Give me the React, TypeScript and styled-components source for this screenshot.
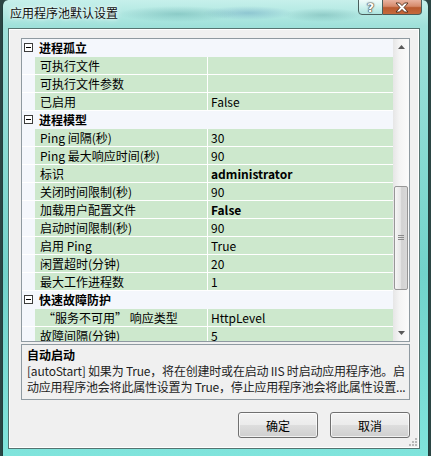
import styled, { createGlobalStyle } from "styled-components";

const GlobalStyle = createGlobalStyle`
  html, body {
    margin: 0;
    padding: 0;
    background: #2b4544;
  }
  body {
    font-family: "Noto Sans CJK SC", sans-serif;
    font-size: 12px;
    color: #000;
  }
`;

const Window = styled.div`
  width: 427px;
  height: 456px;
  margin-left: 2px;
  box-sizing: border-box;
  border-left: 1px solid #21403e;
  border-right: 1px solid #21403e;
  border-radius: 6px 6px 0 0;
  overflow: hidden;
  background:
    radial-gradient(ellipse 60px 8px at 175px 14px, rgba(70, 150, 150, 0.35), transparent),
    radial-gradient(ellipse 45px 7px at 245px 13px, rgba(60, 120, 170, 0.3), transparent),
    radial-gradient(ellipse 40px 7px at 320px 15px, rgba(70, 140, 140, 0.3), transparent),
    linear-gradient(180deg, #c6f0eb 0px, #9fe1da 26px, #72d3cb 60%, #80e4dc 100%);
  display: flex;
  flex-direction: column;
`;

const TitleBar = styled.div`
  height: 28px;
  flex: none;
  display: flex;
  justify-content: space-between;
  align-items: flex-start;
  padding: 0 6px 0 7px;
`;

const Title = styled.div`
  margin-top: 4px;
  font-size: 12px;
  line-height: 17px;
  color: #101010;
  text-shadow: 0 0 6px rgba(255, 255, 255, 0.9), 0 0 3px rgba(255, 255, 255, 0.9);
`;

const CaptionButtons = styled.div`
  display: flex;
  margin-top: -1px;
`;

const CaptionButton = styled.div<{ $close?: boolean }>`
  width: ${(p) => (p.$close ? "39px" : "25px")};
  height: 16px;
  box-sizing: border-box;
  border: 1px solid #4a5e5c;
  border-left-width: ${(p) => (p.$close ? "0" : "1px")};
  border-radius: ${(p) => (p.$close ? "0 0 4px 0" : "0 0 0 4px")};
  background: ${(p) =>
    p.$close
      ? "linear-gradient(180deg, #e9b3a0 0%, #d68a6b 45%, #b9592f 55%, #c66a3c 100%)"
      : "linear-gradient(180deg, rgba(255,255,255,0.75) 0%, rgba(220,245,242,0.6) 50%, rgba(170,225,220,0.5) 100%)"};
  display: flex;
  align-items: center;
  justify-content: center;
  font: bold 13px "DejaVu Sans", sans-serif;
  color: #fff;
  text-shadow: 0 0 1px #333, 0 0 1px #333, 0 0 2px #333;
`;

const Client = styled.div`
  margin: 0 8px 0 5px;
  width: 412px;
  height: 421px;
  box-sizing: border-box;
  border: 1px solid #557370;
  box-shadow: inset 0 0 0 1px #ffffff;
  background: #f0f0f0;
  padding: 9px 9px 0 12px;
  position: relative;
  display: flex;
  flex-direction: column;
`;

const Grid = styled.div`
  height: 304px;
  box-sizing: border-box;
  border: 1px solid #8f9aa1;
  display: flex;
  background: #f4f7fc;
`;

const Rows = styled.div`
  width: 371px;
  overflow: hidden;
  display: flex;
  flex-direction: column;
`;

const Row = styled.div`
  height: 17px;
  flex: none;
  display: flex;
  border-bottom: 1px solid #ffffff;
  line-height: 17px;
  white-space: nowrap;
`;

const CategoryRow = styled(Row)`
  border-bottom-color: #f4f7fc;
  font-weight: bold;
`;

const Gutter = styled.div`
  width: 13px;
  flex: none;
  background: #f4f7fc;
  display: flex;
  align-items: center;
`;

const Toggle = styled.div`
  width: 9px;
  height: 9px;
  margin-left: 2px;
  box-sizing: border-box;
  border: 1px solid #3c3c3c;
  background: #fff;
  position: relative;
  &::after {
    content: "";
    position: absolute;
    left: 1px;
    right: 1px;
    top: 3px;
    height: 1px;
    background: #000;
  }
`;

const CategoryLabel = styled.div`
  padding-left: 4px;
`;

const LabelCell = styled.div<{ $indent?: boolean }>`
  width: 173px;
  flex: none;
  box-sizing: border-box;
  background: #cde8cd;
  border-right: 1px solid #ffffff;
  padding-left: ${(p) => (p.$indent ? "8px" : "5px")};
  overflow: hidden;
`;

const ValueCell = styled.div<{ $bold?: boolean }>`
  flex: 1;
  background: #cde8cd;
  padding-left: 3px;
  font-weight: ${(p) => (p.$bold ? "bold" : "normal")};
`;

const ScrollBar = styled.div`
  width: 16px;
  display: flex;
  flex-direction: column;
  background: linear-gradient(90deg, #e6e6e6, #f4f4f4 40%, #fbfbfb);
`;

const ArrowBox = styled.div`
  height: 16px;
  flex: none;
  display: flex;
  align-items: center;
  justify-content: center;
`;

const Track = styled.div`
  flex: 1;
`;

const Thumb = styled.div<{ $top: number; $size: number }>`
  margin: ${(p) => p.$top}px auto 0;
  width: 14px;
  height: ${(p) => p.$size}px;
  box-sizing: border-box;
  border: 1px solid #979797;
  border-radius: 2px;
  background: linear-gradient(90deg, #f6f6f6 0%, #e6e6e6 45%, #d2d2d2 55%, #d9d9d9 100%);
  display: flex;
  align-items: center;
  justify-content: center;
`;

const Description = styled.div`
  margin-top: 2px;
  height: 56px;
  box-sizing: border-box;
  border: 1px solid #8f9aa1;
  padding: 0 5px;
  white-space: nowrap;
  overflow: hidden;
  color: #1e1e1e;
`;

const DescTitle = styled.div`
  font-weight: bold;
  line-height: 17px;
  margin-top: 1px;
  color: #000;
`;

const DescText = styled.div`
  line-height: 16px;
  letter-spacing: -0.2px;
`;

const ButtonRow = styled.div`
  margin-top: 12px;
  display: flex;
  justify-content: flex-end;
  gap: 12px;
`;

const Button = styled.button`
  width: 80px;
  height: 26px;
  box-sizing: border-box;
  border: 1px solid #707070;
  border-radius: 3px;
  background: linear-gradient(180deg, #f3f3f3 0%, #ebebeb 48%, #dddddd 52%, #cfcfcf 100%);
  box-shadow: inset 0 0 0 1px rgba(255, 255, 255, 0.7);
  font-family: "Noto Sans CJK SC", sans-serif;
  font-size: 12px;
  color: #000;
  padding: 0;
`;

const Grip = styled.svg`
  position: absolute;
  right: 2px;
  bottom: 2px;
`;

type Item = {
  kind: "cat" | "item";
  label: string;
  value?: string;
  bold?: boolean;
  indent?: boolean;
};

const items: Item[] = [
  { kind: "cat", label: "进程孤立" },
  { kind: "item", label: "可执行文件", value: "" },
  { kind: "item", label: "可执行文件参数", value: "" },
  { kind: "item", label: "已启用", value: "False" },
  { kind: "cat", label: "进程模型" },
  { kind: "item", label: "Ping 间隔(秒)", value: "30" },
  { kind: "item", label: "Ping 最大响应时间(秒)", value: "90" },
  { kind: "item", label: "标识", value: "administrator", bold: true },
  { kind: "item", label: "关闭时间限制(秒)", value: "90" },
  { kind: "item", label: "加载用户配置文件", value: "False", bold: true },
  { kind: "item", label: "启动时间限制(秒)", value: "90" },
  { kind: "item", label: "启用 Ping", value: "True" },
  { kind: "item", label: "闲置超时(分钟)", value: "20" },
  { kind: "item", label: "最大工作进程数", value: "1" },
  { kind: "cat", label: "快速故障防护" },
  { kind: "item", label: "“服务不可用” 响应类型", value: "HttpLevel", indent: true },
  { kind: "item", label: "故障间隔(分钟)", value: "5" },
];

const App = () => {
  return (
    <>
      <GlobalStyle />
      <Window>
        <TitleBar>
          <Title>应用程序池默认设置</Title>
          <CaptionButtons>
            <CaptionButton>?</CaptionButton>
            <CaptionButton $close>
              <svg width="14" height="11" viewBox="0 0 14 11">
                <path
                  d="M1 1 L4.5 1 L7 3.6 L9.5 1 L13 1 L9 5.5 L13 10 L9.5 10 L7 7.4 L4.5 10 L1 10 L5 5.5 Z"
                  fill="#fff"
                  stroke="#4a2a1a"
                  strokeWidth="0.9"
                />
              </svg>
            </CaptionButton>
          </CaptionButtons>
        </TitleBar>
        <Client>
          <Grid>
            <Rows>
              {items.map((it, i) =>
                it.kind === "cat" ? (
                  <CategoryRow key={i}>
                    <Gutter>
                      <Toggle />
                    </Gutter>
                    <CategoryLabel>{it.label}</CategoryLabel>
                  </CategoryRow>
                ) : (
                  <Row key={i}>
                    <Gutter />
                    <LabelCell $indent={it.indent}>{it.label}</LabelCell>
                    <ValueCell $bold={it.bold}>{it.value}</ValueCell>
                  </Row>
                )
              )}
            </Rows>
            <ScrollBar>
              <ArrowBox>
                <svg width="7" height="4" viewBox="0 0 7 4">
                  <path d="M0 4 L3.5 0 L7 4 Z" fill="#5a5a5a" />
                </svg>
              </ArrowBox>
              <Track>
                <Thumb $top={131} $size={104}>
                  <svg width="6" height="6" viewBox="0 0 6 6">
                    <path d="M0 0.5 H6 M0 2.5 H6 M0 4.5 H6" stroke="#8a8a8a" strokeWidth="1" />
                  </svg>
                </Thumb>
              </Track>
              <ArrowBox>
                <svg width="7" height="4" viewBox="0 0 7 4">
                  <path d="M0 0 L3.5 4 L7 0 Z" fill="#5a5a5a" />
                </svg>
              </ArrowBox>
            </ScrollBar>
          </Grid>
          <Description>
            <DescTitle>自动启动</DescTitle>
            <DescText>[autoStart] 如果为 True，将在创建时或在启动 IIS 时启动应用程序池。启</DescText>
            <DescText>动应用程序池会将此属性设置为 True，停止应用程序池会将此属性设置...</DescText>
          </Description>
          <ButtonRow>
            <Button>确定</Button>
            <Button>取消</Button>
          </ButtonRow>
          <Grip width="8" height="8" viewBox="0 0 8 8">
            <rect x="6" y="0" width="2" height="2" fill="#b8b8b8" />
            <rect x="3" y="3" width="2" height="2" fill="#b8b8b8" />
            <rect x="6" y="3" width="2" height="2" fill="#b8b8b8" />
            <rect x="0" y="6" width="2" height="2" fill="#b8b8b8" />
            <rect x="3" y="6" width="2" height="2" fill="#b8b8b8" />
            <rect x="6" y="6" width="2" height="2" fill="#b8b8b8" />
          </Grip>
        </Client>
      </Window>
    </>
  );
};

export default App;
